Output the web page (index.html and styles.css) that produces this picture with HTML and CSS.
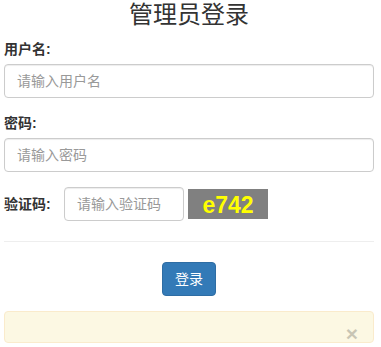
FILE: index.html
```html
<!DOCTYPE html>
<html lang="zh-CN">
<head>
  <meta charset="UTF-8">
  <title>管理员登录</title>
  <link rel="stylesheet" href="styles.css">
</head>
<body>
  <div class="container">
    <h2 class="title">管理员登录</h2>

    <div class="form-group">
      <label for="username">用户名:</label>
      <input id="username" class="form-control" placeholder="请输入用户名" />
    </div>
    <div class="form-group">
      <label for="password">密码:</label>
      <input id="password" type="password" class="form-control" placeholder="请输入密码" />
    </div>
    <div class="captcha-row">
      <label for="code">验证码:</label>
      <input id="code" class="form-control code-input" placeholder="请输入验证码" />
      <div class="captcha">e742</div>
    </div>

    <hr>

    <div class="actions">
      <button class="btn-primary">登录</button>
    </div>

    <div class="alert"><span class="close">×</span></div>
  </div>
</body>
</html>
```

FILE: styles.css
```css
* { box-sizing: border-box; }
body { margin: 0; font-family: "Liberation Sans", "Noto Sans CJK SC", sans-serif; font-size: 14px; line-height: 20px; color: #333; background: #fff; }
.container { padding: 0 7px 0 4px; }
.title { margin: 0 0 9px; font-size: 24px; line-height: 30px; font-weight: normal; text-align: center; }
label { display: block; margin-bottom: 5px; font-weight: bold; }
.form-group { margin-bottom: 15px; }
.form-control { display: block; width: 100%; height: 34px; padding: 6px 12px; font: inherit; color: #555; border: 1px solid #ccc; border-radius: 4px; box-shadow: inset 0 1px 1px rgba(0,0,0,.075); }
.form-control::placeholder { color: #999; }
.captcha-row { display: flex; align-items: center; }
.captcha-row label { margin: 0; width: 60px; }
.code-input { width: 120px; }
.captcha { width: 80px; height: 30px; margin-left: 4px; background: #808080; color: #ff0; font-family: "Liberation Sans", sans-serif; font-weight: bold; font-size: 23px; line-height: 32px; text-align: center; }
hr { margin: 20px 0; border: 0; border-top: 1px solid #eee; }
.actions { text-align: center; }
.btn-primary { height: 34px; padding: 6px 12px; font: inherit; color: #fff; background: #337ab7; border: 1px solid #2e6da4; border-radius: 4px; }
.alert { display: flex; justify-content: flex-end; align-items: flex-end; height: 32px; margin-top: 15px; padding: 0 15px 0 0; background: #fcf8e3; border: 1px solid #faebcc; border-radius: 4px; }
.close { font-size: 21px; font-weight: bold; line-height: 17px; color: #000; opacity: .2; }
```
